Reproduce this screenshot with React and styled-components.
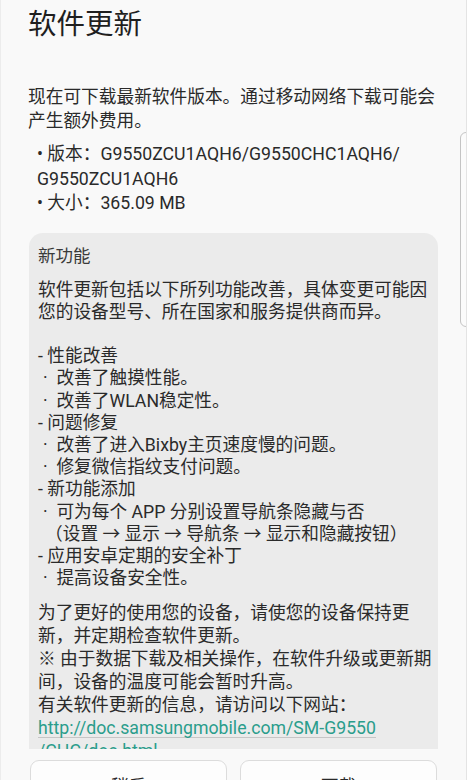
import React from 'react';
import styled, { createGlobalStyle } from 'styled-components';

const GlobalStyle = createGlobalStyle`
  html, body {
    margin: 0;
    padding: 0;
    background: #f9f9f9;
  }
`;

const Screen = styled.div`
  position: relative;
  width: 467px;
  height: 780px;
  overflow: hidden;
  box-sizing: border-box;
  background: #f9f9f9;
  border-left: 1px solid #ececec;
  border-right: 1px solid #e4e4e4;
  font-family: Roboto, 'Noto Sans CJK SC', sans-serif;
  color: #2a2a2a;
  display: flex;
  flex-direction: column;
`;

const SideHandle = styled.div`
  position: absolute;
  top: 132px;
  right: -6px;
  width: 12px;
  height: 195px;
  box-sizing: border-box;
  border: 1.5px solid #c4c4c4;
  border-radius: 6px;
  background: #fbfbfb;
`;

const Title = styled.h1`
  margin: 7px 0 0;
  padding: 0 27px;
  font-size: 28.5px;
  line-height: 36px;
  font-weight: 400;
  color: #1f1f1f;
`;

const Intro = styled.p`
  margin: 42px 0 0;
  padding: 0 20px 0 27px;
  font-size: 17.7px;
  line-height: 24px;
`;

const InfoList = styled.ul`
  list-style: none;
  margin: 9px 0 0;
  padding: 0 20px 0 36px;
  font-size: 17.7px;
  line-height: 24.5px;
`;

const Notes = styled.div`
  margin: 17px 28px 0;
  height: 516px;
  overflow: hidden;
  flex-shrink: 0;
  box-sizing: border-box;
  padding: 12px 6px 0 9px;
  background: #ebebeb;
  border-radius: 14px 14px 0 0;
  font-size: 17.7px;
  line-height: 22.2px;
`;

const NotesHeading = styled.h2`
  margin: 0;
  font-size: 17.5px;
  line-height: 23px;
  font-weight: 400;
  color: #3a3a3a;
`;

const Block = styled.p`
  margin: ${({ $gap }) => $gap || 0}px 0 0;
  line-height: ${({ $lh }) => $lh || 22.2}px;
  white-space: nowrap;
`;

const Item = styled.span`
  display: block;
  padding-left: ${({ $indent }) => $indent || 0}px;
`;

const Link = styled.a`
  color: #2a9d8c;
  text-decoration: underline;
  text-decoration-color: #c6c6c6;
  text-underline-offset: 3px;
`;

const Actions = styled.div`
  display: flex;
  gap: 13px;
  padding: 0 29px 0 29px;
  margin-top: 11px;
`;

const Action = styled.button`
  flex: 1;
  height: 50px;
  border: 1px solid #dcdcdc;
  border-radius: 9px;
  background: #fdfdfd;
  font-family: Roboto, 'Noto Sans CJK SC', sans-serif;
  font-size: 17.5px;
  color: #2a2a2a;
  padding: 0;
`;

const changes = [
  { text: '- 性能改善' },
  { text: '· 改善了触摸性能。', indent: 5 },
  { text: '· 改善了WLAN稳定性。', indent: 5 },
  { text: '- 问题修复' },
  { text: '· 改善了进入Bixby主页速度慢的问题。', indent: 5 },
  { text: '· 修复微信指纹支付问题。', indent: 5 },
  { text: '- 新功能添加' },
  { text: '· 可为每个 APP 分别设置导航条隐藏与否', indent: 5 },
  { text: '（设置 → 显示 → 导航条 → 显示和隐藏按钮）', indent: 7 },
  { text: '- 应用安卓定期的安全补丁' },
  { text: '· 提高设备安全性。', indent: 5 },
];

const App = () => {
  return (
    <Screen>
      <GlobalStyle />
      <Title>软件更新</Title>
      <Intro>
        现在可下载最新软件版本。通过移动网络下载可能会
        <br />
        产生额外费用。
      </Intro>
      <InfoList>
        <li>
          • 版本：G9550ZCU1AQH6/G9550CHC1AQH6/
          <br />
          G9550ZCU1AQH6
        </li>
        <li>• 大小：365.09 MB</li>
      </InfoList>
      <Notes>
        <NotesHeading>新功能</NotesHeading>
        <Block $gap={11}>
          软件更新包括以下所列功能改善，具体变更可能因
          <br />
          您的设备型号、所在国家和服务提供商而异。
        </Block>
        <Block $gap={22.2}>
          {changes.map(({ text, indent }) => (
            <Item key={text} $indent={indent}>
              {text.replace('· ', '·\u00a0\u00a0')}
            </Item>
          ))}
        </Block>
        <Block $gap={13} $lh={23}>
          为了更好的使用您的设备，请使您的设备保持更
          <br />
          新，并定期检查软件更新。
          <br />
          ※ 由于数据下载及相关操作，在软件升级或更新期
          <br />
          间，设备的温度可能会暂时升高。
          <br />
          有关软件更新的信息，请访问以下网站：
          <br />
          <Link href="#">http://doc.samsungmobile.com/SM-G9550</Link>
          <br />
          <Link href="#">/CHC/doc.html</Link>
        </Block>
      </Notes>
      <Actions>
        <Action>稍后</Action>
        <Action>下载</Action>
      </Actions>
      <SideHandle />
    </Screen>
  );
};

export default App;
